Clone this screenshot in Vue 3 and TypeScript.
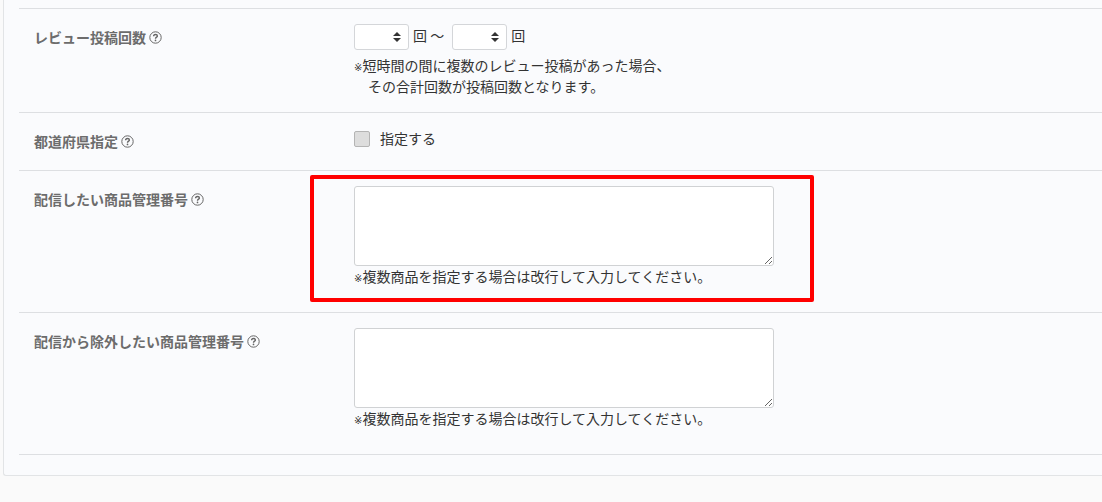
<script setup lang="ts">
import { ref } from 'vue'

interface ProductField {
  id: string
  label: string
  highlighted: boolean
}

const productFields: ProductField[] = [
  { id: 'include-products', label: '配信したい商品管理番号', highlighted: true },
  { id: 'exclude-products', label: '配信から除外したい商品管理番号', highlighted: false },
]

const counts = ['1', '2', '3', '4', '5']
const minCount = ref('')
const maxCount = ref('')
const byPrefecture = ref(false)
const products = ref<Record<string, string>>({
  'include-products': '',
  'exclude-products': '',
})
</script>

<template>
  <svg class="sprite" aria-hidden="true">
    <symbol id="help-icon" viewBox="0 0 13 13">
      <circle cx="6.5" cy="6.5" r="5.7" fill="none" stroke="currentColor" stroke-width="1" />
      <path
        d="M4.6 5.3C4.6 4.1 5.4 3.5 6.5 3.5S8.4 4.1 8.4 5C8.4 6.2 6.5 6.2 6.5 7.7"
        fill="none"
        stroke="currentColor"
        stroke-width="1.4"
      />
      <circle cx="6.5" cy="9.4" r="0.85" fill="currentColor" />
    </symbol>
  </svg>
  <main class="panel">
    <div class="rows">
      <section class="row">
        <div class="heading">
          <label for="min-count">レビュー投稿回数</label>
          <button type="button" class="help" aria-label="ヘルプ"><svg><use href="#help-icon" /></svg></button>
        </div>
        <div class="field">
          <div class="range">
            <span class="picker">
              <select id="min-count" v-model="minCount">
                <option value=""></option>
                <option v-for="n in counts" :key="n" :value="n">{{ n }}</option>
              </select>
              <svg class="arrows" viewBox="0 0 8 10" aria-hidden="true"><path d="M4 0L8 4H0ZM0 6H8L4 10Z" /></svg>
            </span>
            <span class="unit">回 〜</span>
            <span class="picker second">
              <select v-model="maxCount" aria-label="レビュー投稿回数の上限">
                <option value=""></option>
                <option v-for="n in counts" :key="n" :value="n">{{ n }}</option>
              </select>
              <svg class="arrows" viewBox="0 0 8 10" aria-hidden="true"><path d="M4 0L8 4H0ZM0 6H8L4 10Z" /></svg>
            </span>
            <span class="unit">回</span>
          </div>
          <p class="note"><span class="mark">※</span>短時間の間に複数のレビュー投稿があった場合、<br />&#12288;その合計回数が投稿回数となります。</p>
        </div>
      </section>

      <section class="row">
        <div class="heading">
          <span>都道府県指定</span>
          <button type="button" class="help" aria-label="ヘルプ"><svg><use href="#help-icon" /></svg></button>
        </div>
        <div class="field">
          <label class="check"><input v-model="byPrefecture" type="checkbox" />指定する</label>
        </div>
      </section>

      <section v-for="item in productFields" :key="item.id" class="row">
        <div class="heading">
          <label :for="item.id">{{ item.label }}</label>
          <button type="button" class="help" aria-label="ヘルプ"><svg><use href="#help-icon" /></svg></button>
        </div>
        <div class="field products">
          <textarea :id="item.id" v-model="products[item.id]"></textarea>
          <p class="note"><span class="mark">※</span>複数商品を指定する場合は改行して入力してください。</p>
          <div v-if="item.highlighted" class="highlight"></div>
        </div>
      </section>
    </div>
  </main>
</template>

<style>
body {
  background: #fafafa;
}
</style>

<style scoped>
.sprite {
  position: absolute;
  width: 0;
  height: 0;
}

.panel {
  box-sizing: border-box;
  margin: 0 0 26px 3px;
  padding: 8px 0 20px 15px;
  border: solid #e2e4e6;
  border-width: 0 0 1px 1px;
  border-bottom-left-radius: 3px;
  background: #fafbfd;
  color: #333;
  font: 14px/21px "Noto Sans CJK JP", sans-serif;
}

.rows {
  border-top: 1px solid #dddfe2;
}

.row {
  display: grid;
  grid-template-columns: 320px minmax(0, 1fr);
  padding: 15px;
  border-bottom: 1px solid #dddfe2;
}

.heading {
  display: flex;
  align-items: center;
  align-self: start;
  gap: 3px;
  padding: 3px 0;
  color: #6c6c6c;
  font-weight: 700;
}

.help {
  display: flex;
  padding: 0;
  border: 0;
  background: none;
  color: #666;
  cursor: pointer;
}

.help svg {
  width: 13px;
  height: 13px;
}

.range {
  display: flex;
  gap: 4px;
  margin-bottom: 5px;
}

.unit {
  line-height: 22px;
}

.picker {
  position: relative;
}

.second {
  margin-left: 4px;
}

select {
  display: block;
  box-sizing: border-box;
  width: 55px;
  height: 26px;
  padding: 0 20px 0 6px;
  appearance: none;
  border: 1px solid #d4d6d9;
  border-radius: 3px;
  background: #fff;
  color: inherit;
  font: inherit;
}

.arrows {
  position: absolute;
  top: 8px;
  right: 8px;
  width: 8px;
  height: 10px;
  fill: #333;
  pointer-events: none;
}

.note {
  margin: 0;
}

.mark {
  font-family: "DejaVu Sans", "Noto Sans CJK JP", sans-serif;
  font-size: 10px;
  line-height: 1;
}

.check {
  display: inline-flex;
  align-items: center;
  gap: 10px;
}

.check input {
  width: 16px;
  height: 16px;
  margin: 0;
  appearance: none;
  border: 1px solid #b4b4b4;
  border-radius: 2px;
  background: #ddd;
}

.check input:checked {
  background: #666;
}

.products {
  position: relative;
  width: 100%;
  max-width: 420px;
  padding-bottom: 10px;
}

textarea {
  display: block;
  box-sizing: border-box;
  width: 100%;
  height: 80px;
  padding: 6px;
  border: 1px solid #d0d2d4;
  border-radius: 3px;
  background: #fff;
  color: inherit;
  font: inherit;
  resize: both;
}

.highlight {
  position: absolute;
  inset: -11px -40px -5px -44px;
  border: 4px solid #f00;
  border-radius: 2px;
  pointer-events: none;
}
</style>
